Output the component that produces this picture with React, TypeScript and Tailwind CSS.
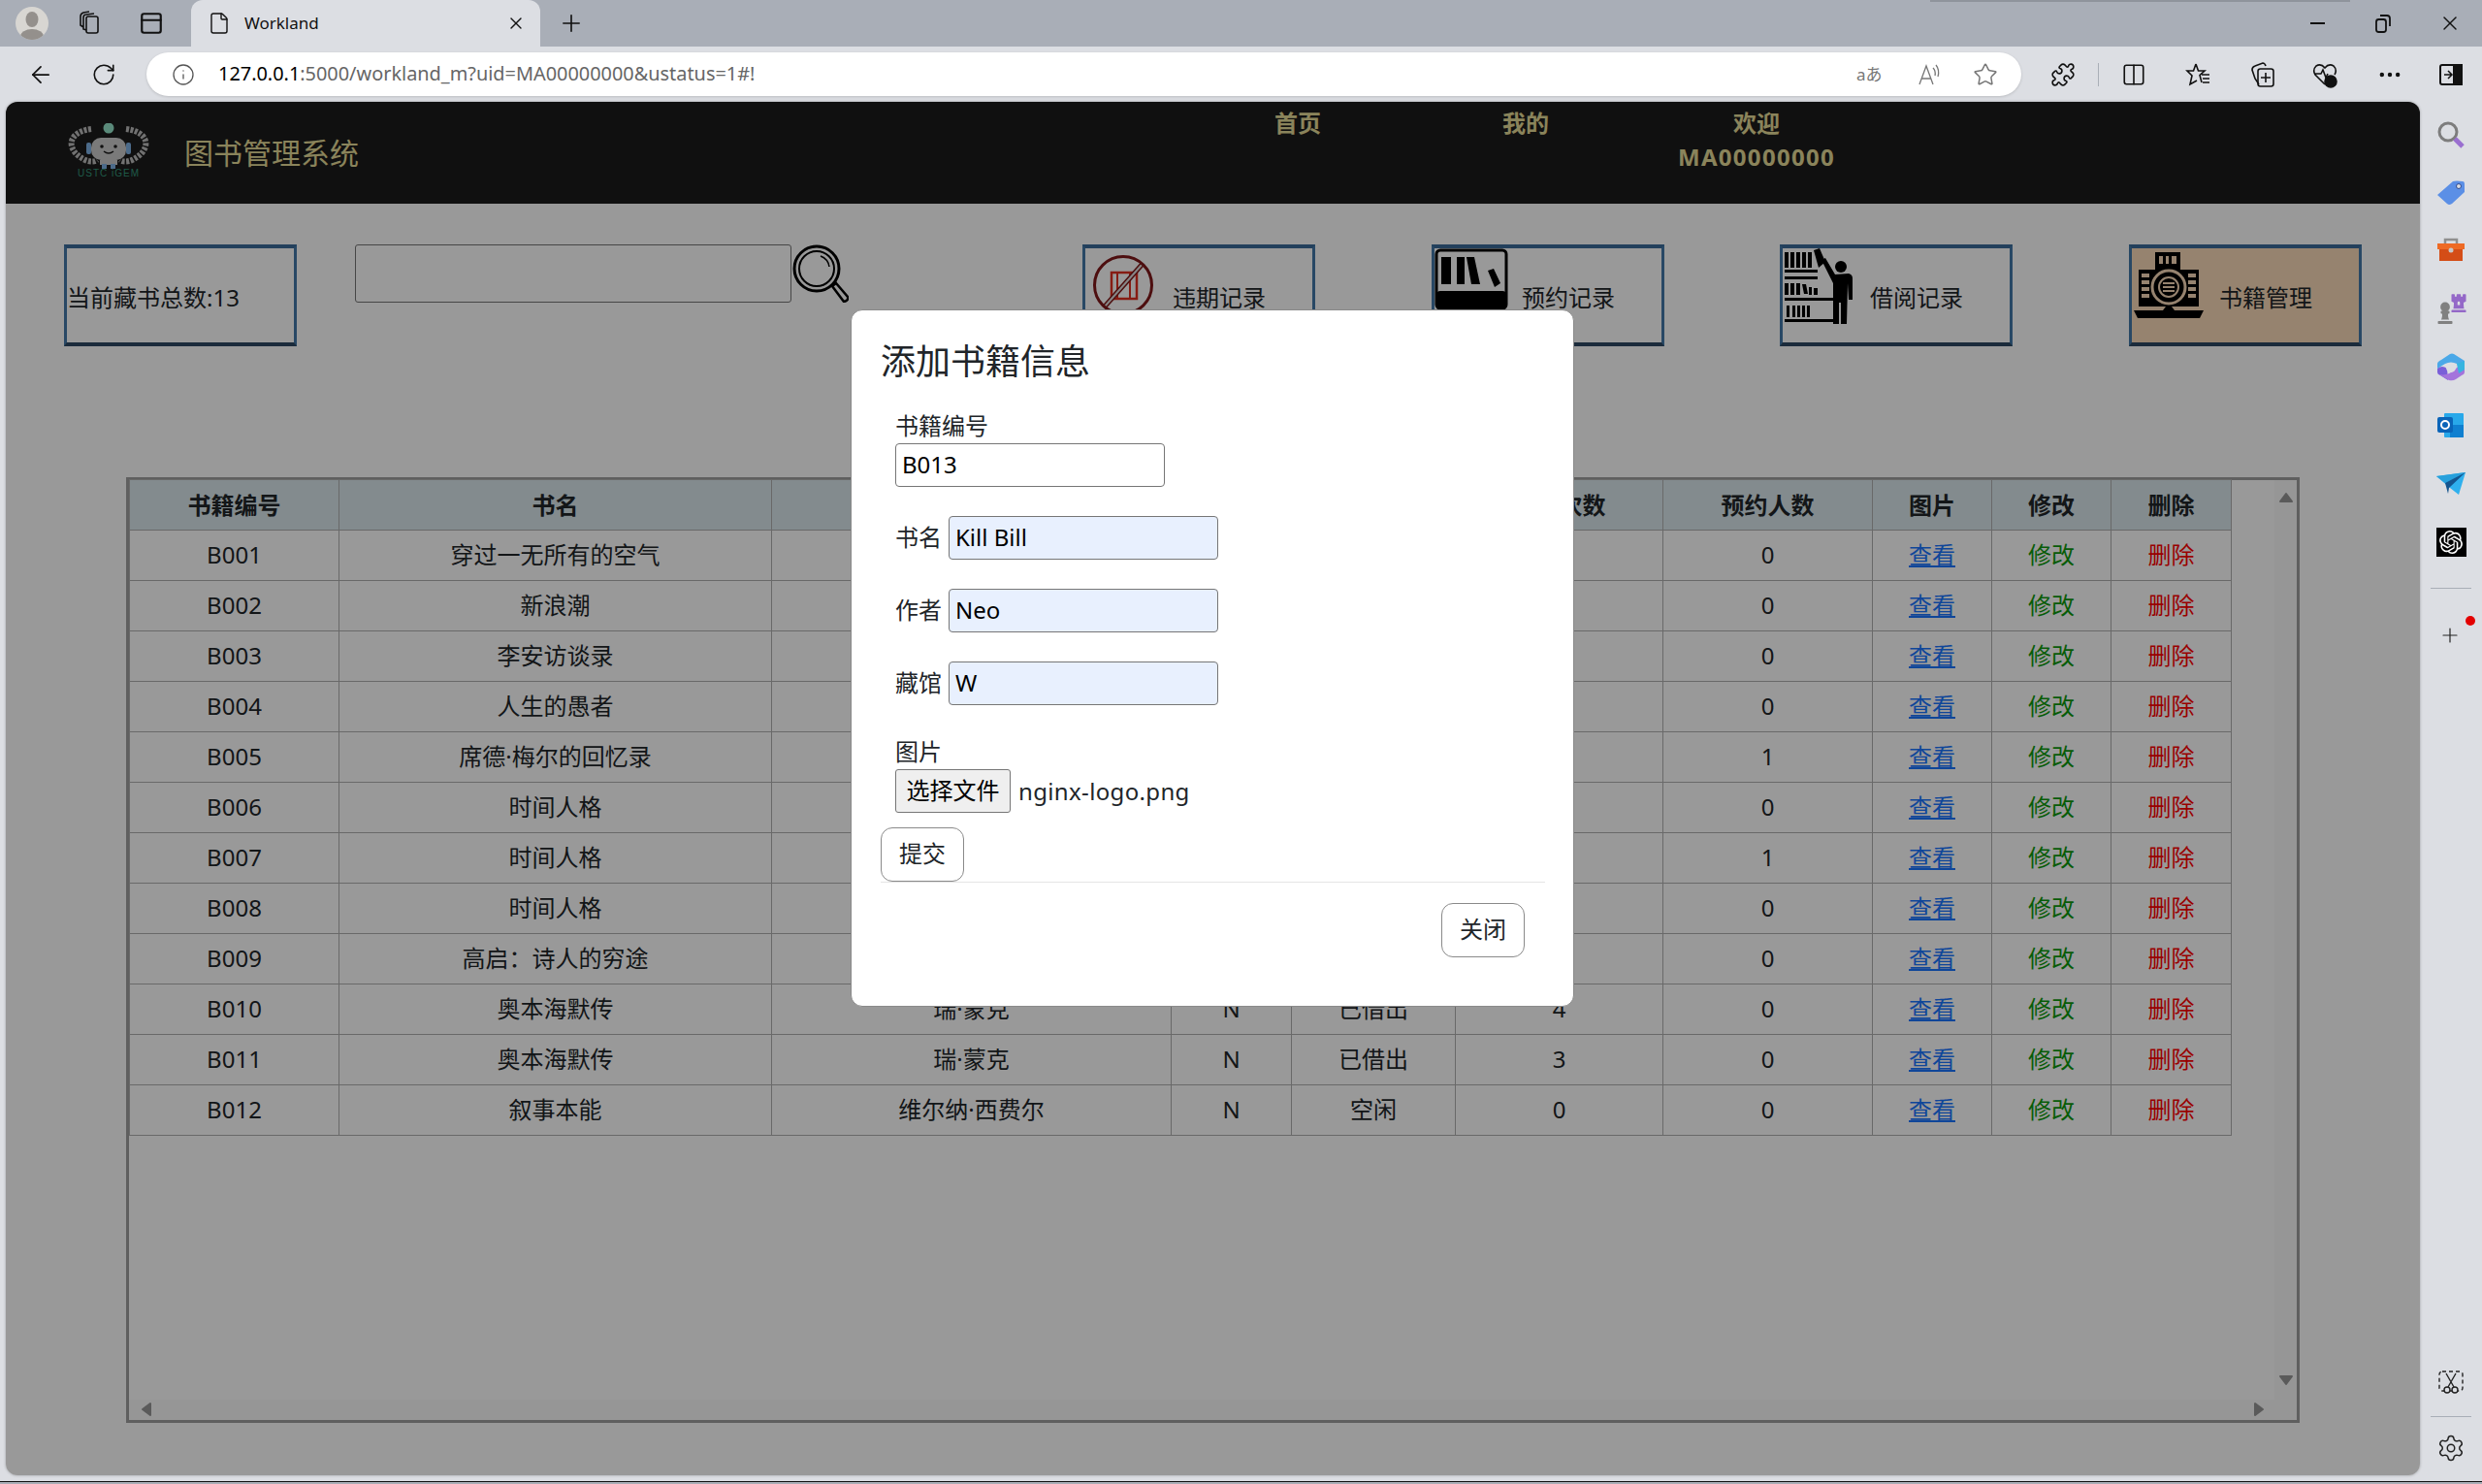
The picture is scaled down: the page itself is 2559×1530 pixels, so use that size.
import React from "react";
import {
  ArrowLeft,
  Columns2,
  File,
  Info,
  MoreHorizontal,
  PanelTop,
  Plus,
  Puzzle,
  RotateCw,
  Settings,
  Star,
  X,
} from "lucide-react";
import { FaChessPawn, FaChessRook } from "react-icons/fa";
import { SiOpenai } from "react-icons/si";

// cells under the modal can't be read in the reference, so they stay empty
const books = [
  ["B001", "穿过一无所有的空气", "", "", "", "", "0"],
  ["B002", "新浪潮", "", "", "", "", "0"],
  ["B003", "李安访谈录", "", "", "", "", "0"],
  ["B004", "人生的愚者", "", "", "", "", "0"],
  ["B005", "席德·梅尔的回忆录", "", "", "", "", "1"],
  ["B006", "时间人格", "", "", "", "", "0"],
  ["B007", "时间人格", "", "", "", "", "1"],
  ["B008", "时间人格", "", "", "", "", "0"],
  ["B009", "高启：诗人的穷途", "", "", "", "", "0"],
  ["B010", "奥本海默传", "瑞·蒙克", "N", "已借出", "4", "0"],
  ["B011", "奥本海默传", "瑞·蒙克", "N", "已借出", "3", "0"],
  ["B012", "叙事本能", "维尔纳·西费尔", "N", "空闲", "0", "0"],
];

const heads = ["书籍编号", "书名", "作者", "是否", "状态", "借阅次数", "预约人数", "图片", "修改", "删除"];
const widths = ["w-[216px]", "w-[446px]", "w-[412px]", "w-[124px]", "w-[169px]", "w-[214px]", "w-[216px]", "w-[123px]", "w-[123px]", "w-[124px]"];

const Logo = () => (
  <svg width="84" height="56" viewBox="0 0 84 56" className="ml-[64px] mt-[22px] shrink-0">
    <path d="M24 6 C8 8 2 16 4 24 C6 30 10 34 18 38 C22 40 28 40 30 38" fill="none" stroke="#bdbdbd" strokeWidth="6" strokeDasharray="3 1.5" />
    <path d="M60 6 C76 8 82 16 80 24 C78 30 74 34 66 38 C62 40 56 40 54 38" fill="none" stroke="#bdbdbd" strokeWidth="6" strokeDasharray="3 1.5" />
    <circle cx="42" cy="5" r="5.5" fill="#96e6cb" />
    <rect x="24" y="15" width="36" height="23" rx="10" fill="#cccccc" />
    <rect x="19" y="20" width="5" height="12" rx="2" fill="#7fb2e6" />
    <rect x="60" y="20" width="5" height="12" rx="2" fill="#7fb2e6" />
    <circle cx="35" cy="24" r="1.8" fill="#1c1c1c" />
    <circle cx="49" cy="24" r="1.8" fill="#1c1c1c" />
    <path d="M37 29 Q42 33 47 29" fill="none" stroke="#1c1c1c" strokeWidth="1.5" />
    <rect x="33" y="38" width="18" height="5" fill="#cccccc" />
    <rect x="35" y="42" width="5" height="5" fill="#7fb2e6" />
    <rect x="44" y="42" width="5" height="5" fill="#7fb2e6" />
    <text x="42" y="55" textAnchor="middle" fontSize="10" letterSpacing="1" fill="#33967a" fontFamily="Liberation Sans">USTC iGEM</text>
  </svg>
);

const Magnifier = () => (
  <svg width="59" height="60" viewBox="0 0 59 60" className="shrink-0">
    <circle cx="26" cy="25" r="23" fill="none" stroke="#000" strokeWidth="3" />
    <circle cx="26" cy="25" r="18" fill="none" stroke="#000" strokeWidth="2" />
    <path d="M30 12 A14 14 0 0 1 39 23" fill="none" stroke="#000" strokeWidth="1.5" />
    <path d="M42 43 L46 40 L58 54 Q59 58 54 59 Z" fill="none" stroke="#000" strokeWidth="2.5" />
  </svg>
);

const OverdueIcon = () => (
  <svg width="64" height="64" viewBox="0 0 64 64" className="ml-[7px] mt-[6px] shrink-0">
    <rect x="20" y="19" width="26" height="27" fill="none" stroke="#e03020" strokeWidth="2.5" />
    <rect x="26" y="19" width="13" height="27" fill="none" stroke="#e03020" strokeWidth="2" />
    <path d="M13 54 L52 10" stroke="#801818" strokeWidth="5" />
    <path d="M13 54 L52 10" stroke="#e0e0e0" strokeWidth="2" />
    <circle cx="32" cy="32" r="29.5" fill="none" stroke="#80181a" strokeWidth="3" />
  </svg>
);

const ReserveIcon = () => (
  <svg width="76" height="66" viewBox="0 0 76 66" className="shrink-0">
    <rect x="2" y="2" width="72" height="60" rx="4" fill="none" stroke="#000" strokeWidth="3" />
    <rect x="2" y="44" width="72" height="18" rx="4" fill="#000" />
    <rect x="7" y="9" width="10" height="28" fill="#000" />
    <rect x="23" y="9" width="8" height="28" fill="#000" />
    <path d="M33 9 L41 9 L47 37 L38 37 Z" fill="#000" />
    <path d="M55 23 L61 21 L68 36 L62 40 Z" fill="#000" />
  </svg>
);

const BorrowIcon = () => (
  <svg width="78" height="78" viewBox="0 0 78 78" className="shrink-0">
    <path d="M2 4h4v16H2zM8 4h4v16H8zM14 4h4v16h-4zM20 4h4v16h-4zM26 4h4v16h-4z" fill="#000" />
    <path d="M32 2 L38 0 L44 14 L37 20 Z" fill="#000" />
    <rect x="2" y="22" width="34" height="3" fill="#000" />
    <rect x="2" y="29" width="34" height="3" fill="#000" />
    <path d="M2 36h4v12H2zM8 36h4v12H8zM14 36h4v12h-4zM20 37l4 0l2 10h-4zM27 40h3v8h-3zM32 41h4v7h-4z" fill="#000" />
    <rect x="2" y="51" width="50" height="3" fill="#000" />
    <path d="M4 59h3v12H4zM10 59h3v12h-3zM15 59h3v12h-3zM20 59h3v12h-3zM25 59h3v12h-3z" fill="#000" />
    <rect x="2" y="73" width="50" height="3" fill="#000" />
    <circle cx="60" cy="19" r="6" fill="#000" />
    <path d="M40 12 L44 10 L54 27 L68 26 Q72 27 72 31 L72 53 L68 53 L67 36 L66 78 L60 78 L60 56 L58 56 L58 78 L52 78 L52 36 Z" fill="#000" />
  </svg>
);

const ManageIcon = () => (
  <svg width="72" height="70" viewBox="0 0 72 70" className="ml-[2px] mt-[4px] shrink-0">
    <rect x="22" y="0" width="26" height="18" fill="#000" />
    <path d="M26 4h4v8h-4zM33 4h3v8h-3zM39 4h5v8h-5z" fill="#fbdbb9" />
    <rect x="5" y="18" width="62" height="38" fill="#000" />
    <path d="M8 22h8v4H8zM8 29h8v4H8zM8 36h8v4H8zM8 43h8v4H8zM56 22h8v4h-8zM56 29h8v4h-8zM56 36h8v4h-8zM56 43h8v4h-8z" fill="#fbdbb9" />
    <circle cx="36" cy="36" r="17" fill="none" stroke="#fbdbb9" strokeWidth="3" />
    <circle cx="36" cy="36" r="10" fill="none" stroke="#fbdbb9" strokeWidth="2" />
    <path d="M30 32h12M30 36h12M30 40h12" stroke="#fbdbb9" strokeWidth="2" />
    <path d="M0 60 H30 L33 56 H39 L42 60 H72 L68 68 H4 Z" fill="#000" />
  </svg>
);

const Triangle = ({ points, className }: { points: string; className: string }) => (
  <svg width="16" height="16" viewBox="0 0 16 16" className={className}>
    <polygon points={points} fill="#969696" stroke="#969696" strokeWidth="2" strokeLinejoin="round" />
  </svg>
);

const StatBox = ({ label, icon, active }: { label: string; icon: React.ReactNode; active?: boolean }) => (
  <div
    className={`flex h-[105px] w-[240px] shrink-0 border-x-[3px] border-y-4 border-x-[#4379a8] border-t-[#3b6c99] border-b-[#2d4963] ${
      active ? "bg-[#fbdbb9]" : ""
    }`}
  >
    <div className="w-[90px] shrink-0">{icon}</div>
    <span className="mt-[34px] text-[24px] leading-[34px]">{label}</span>
  </div>
);

const ModalButton = ({ children }: { children: React.ReactNode }) => (
  <button className="h-[56px] w-[86px] rounded-[12px] border border-[#8a8a8a] bg-white pb-[2px] text-[24px] text-[#212529]">
    {children}
  </button>
);

const FormRow = ({ label, value, className }: { label: string; value: string; className: string }) => (
  <div className={`flex items-center ${className}`}>
    <label className="w-[55px] pb-[2px] text-[24px]">{label}</label>
    <input
      readOnly
      value={value}
      className="h-[45px] w-[278px] rounded-[4px] border border-[#767676] bg-[#e8f0fe] px-[6px] pb-[2px] text-[24px] text-black outline-none"
    />
  </div>
);

const TopBar = () => (
  <div className="relative flex h-[48px] items-center bg-[#a9aeb7]">
    <div className="absolute left-[1990px] top-0 h-[2px] w-[433px] bg-[#8f949c]" />
    <div className="ml-[16px] flex h-[34px] w-[34px] items-end justify-center overflow-hidden rounded-full bg-[#d8d6d2]">
      <svg width="34" height="34" viewBox="0 0 34 34">
        <ellipse cx="17" cy="13" rx="6.5" ry="8" fill="#94908c" />
        <ellipse cx="17" cy="31" rx="12" ry="8" fill="#94908c" />
      </svg>
    </div>
    <div className="ml-[26px] flex w-[32px] justify-center">
      <svg width="28" height="28" viewBox="0 0 28 28" fill="none" stroke="#111" strokeWidth="1.6">
        <rect x="11" y="7" width="12" height="17" rx="2" />
        <path d="M11 21 L8 20 V8 Q8 5 11 5 L19 4 M8 18 L5 16 V7 Q5 4 8 3 L14 2" />
      </svg>
    </div>
    <div className="ml-[32px] flex w-[32px] justify-center">
      <PanelTop size={26} strokeWidth={2} color="#111" />
    </div>
    <div className="ml-[25px] flex h-[48px] w-[360px] items-center rounded-t-[12px] bg-[#dcdee3] pl-[17px]">
      <File size={24} strokeWidth={1.4} color="#111" />
      <span className="ml-[14px] text-[17px] text-[#111]">Workland</span>
      <X size={20} strokeWidth={1.6} color="#111" className="ml-[193px]" />
    </div>
    <Plus size={28} strokeWidth={1.4} color="#111" className="ml-[18px]" />
    <div className="ml-auto flex items-center pr-[21px]">
      <div className="h-[2px] w-[15px] bg-[#111]" />
      <svg width="18" height="22" viewBox="0 0 18 22" fill="none" stroke="#111" strokeWidth="1.8" className="ml-[51px]">
        <rect x="2" y="7" width="10" height="13" rx="2.5" />
        <path d="M6 3 H13 Q16 3 16 6 V14" />
      </svg>
      <X size={24} strokeWidth={1.4} color="#111" className="ml-[48px]" />
    </div>
  </div>
);

const AddressBar = () => (
  <div className="flex h-[57px] items-center bg-[#dcdee3]">
    <ArrowLeft size={28} strokeWidth={1.5} color="#111" className="ml-[28px]" />
    <RotateCw size={26} strokeWidth={1.5} color="#111" className="ml-[38px]" />
    <div className="ml-[31px] flex h-[45px] w-[1933px] items-center rounded-full bg-white pl-[26px] shadow-[0_1px_3px_rgba(0,0,0,0.15)]">
      <Info size={24} strokeWidth={1.3} color="#555" />
      <span className="ml-[24px] pb-[2px] text-[19.9px] text-[#666]">
        <span className="text-black">127.0.0.1</span>:5000/workland_m?uid=MA00000000&ustatus=1#!
      </span>
      <div className="ml-auto flex items-center pr-[24px] text-[#777]">
        <span className="w-[26px] whitespace-nowrap text-[17px]">aあ</span>
        <svg width="26" height="26" viewBox="0 0 26 26" fill="none" stroke="#777" strokeWidth="1.3" className="ml-[36px]">
          <path d="M3 23 L10 4 L17 23 M5.5 17 H14.5 M17 6 Q20 9 19 14 M20 3 Q24 8 22 15" />
        </svg>
        <Star size={26} strokeWidth={1.4} className="ml-[32px]" />
      </div>
    </div>
    <Puzzle size={26} strokeWidth={1.5} color="#111" className="ml-[30px]" />
    <div className="ml-[23px] h-[24px] w-px bg-[#a9aeb7]" />
    <Columns2 size={26} strokeWidth={1.5} color="#111" className="ml-[23px]" />
    <svg width="28" height="28" viewBox="0 0 28 28" fill="none" stroke="#111" strokeWidth="1.6" className="ml-[40px]">
      <path d="M11 3 L13.5 10 L20 10 L15 14.5 L17 22 M11 3 L8.5 10 L2 10 L7 15 L5 24 L12 20 M17 14 H25 M18 18 H25 M18 22 H25" />
    </svg>
    <svg width="28" height="28" viewBox="0 0 28 28" fill="none" stroke="#111" strokeWidth="1.6" className="ml-[38px]">
      <path d="M10 24 L6 18 L3 9 Q3 6 6 5 L14 2 Q16 2 17 5" />
      <rect x="9" y="8" width="16" height="18" rx="2.5" />
      <path d="M17 12 V22 M12 17 H22" />
    </svg>
    <svg width="28" height="28" viewBox="0 0 28 28" fill="none" stroke="#111" strokeWidth="1.6" className="ml-[36px]">
      <path d="M14 24 L4 14 Q1 9 5 5 Q10 2 14 7 Q18 2 23 5 Q27 9 24 14 M3 13 H10 L12 9 L15 17 L17 13" />
      <circle cx="20" cy="21" r="6" fill="#111" />
    </svg>
    <MoreHorizontal size={28} strokeWidth={1.8} color="#111" className="ml-[39px]" />
    <svg width="28" height="28" viewBox="0 0 28 28" fill="none" stroke="#111" strokeWidth="2" className="ml-[35px]">
      <rect x="3" y="4" width="22" height="20" rx="2" />
      <rect x="17" y="4" width="8" height="20" fill="#111" />
      <path d="M7 14 H14 M11 10 L15 14 L11 18" strokeWidth="1.5" />
    </svg>
  </div>
);

const SideBar = () => (
  <div className="flex flex-1 flex-col items-center pt-[19px]">
    <div className="flex flex-col items-center gap-[30px]">
      <svg width="30" height="30" viewBox="0 0 30 30">
        <circle cx="12" cy="12" r="9" fill="none" stroke="#7d7d7d" strokeWidth="3" />
        <path d="M19 19 L27 27" stroke="#9a6fd0" strokeWidth="5" />
      </svg>
      <svg width="30" height="30" viewBox="0 0 30 30">
        <path d="M1 17 L17 3 Q20 2 27 3 Q29 3 29 6 V14 L16 26 Q13 28 11 26 Z" fill="#5b8fe6" />
        <circle cx="23" cy="8" r="2.5" fill="#dcdee3" stroke="#304a90" />
      </svg>
      <svg width="30" height="30" viewBox="0 0 30 30">
        <path d="M9 7 V3 H21 V7" fill="none" stroke="#8f8f8f" strokeWidth="2.5" />
        <rect x="1" y="7" width="28" height="6" fill="#ee6a25" />
        <rect x="3" y="13" width="24" height="12" fill="#d44d17" />
        <circle cx="15" cy="14" r="2.5" fill="#c8c8c8" />
      </svg>
      <div className="relative h-[30px] w-[30px]">
        <FaChessPawn size={24} color="#808080" className="absolute bottom-0 left-[-3px]" />
        <FaChessRook size={20} color="#9468c8" className="absolute right-[-3px] top-[-2px]" />
      </div>
      <svg width="30" height="30" viewBox="0 0 30 30">
        <path d="M5 7 L14 1 Q16 0 18 1 L29 8 V16 L21 11 Q15 8 9 11 L1 16 V11 Q1 9 5 7 Z" fill="#4aa8e8" />
        <path d="M1 11 V20 Q1 22 4 23 L12 28 L11 16 Q6 12 1 16 Z" fill="#7a5fd8" />
        <path d="M29 8 V20 Q29 22 26 23 L20 27 Q17 29 13 28 L3 22 Q12 24 19 17 Q24 12 29 8 Z" fill="#a474dc" />
        <path d="M29 8 V17 L23 21 L21 11 Z" fill="#36b4e0" />
        <circle cx="15" cy="15" r="5" fill="#dcdee3" />
      </svg>
      <svg width="30" height="30" viewBox="0 0 30 30">
        <rect x="8" y="2" width="20" height="25" rx="1" fill="#28a8ea" />
        <path d="M14 14 L28 14 V27 H14 Z" fill="#0f7fd0" />
        <rect x="1" y="6" width="16" height="16" rx="2" fill="#0a64b8" />
        <circle cx="9" cy="14" r="4" fill="none" stroke="#fff" strokeWidth="2" />
      </svg>
      <svg width="30" height="30" viewBox="0 0 30 30">
        <path d="M0 7 L30 3 L23 26 L14 19 Z" fill="#2fb0ee" />
        <path d="M0 7 L30 3 L9 14 Z" fill="#27a0dc" />
        <path d="M9 14 L30 3 L13 19 L12 25 Z" fill="#14558f" />
      </svg>
      <div className="flex h-[30px] w-[31px] items-center justify-center bg-black">
        <SiOpenai size={24} color="#fff" />
      </div>
    </div>
    <div className="mt-[32px] h-px w-[42px] bg-[#a9aeb7]" />
    <div className="relative mt-[33px] flex h-[30px] w-[30px] items-center justify-center">
      <Plus size={24} strokeWidth={1.2} color="#222" className="-ml-[2px]" />
      <div className="absolute right-[-10px] top-[-5px] h-[10px] w-[10px] rounded-full bg-[#e30000]" />
    </div>
    <div className="mt-auto flex flex-col items-center pb-[13px]">
      <svg width="28" height="30" viewBox="0 0 28 30" fill="none" stroke="#222" strokeWidth="1.4">
        <rect x="2" y="4" width="24" height="20" rx="3" strokeDasharray="4 3" />
        <path d="M9 6 L17 20 M19 6 L11 20" />
        <circle cx="10" cy="23" r="3" fill="#dcdee3" />
        <circle cx="18" cy="23" r="3" fill="#dcdee3" />
      </svg>
      <div className="mb-[17px] mt-[20px] h-px w-[42px] bg-[#a9aeb7]" />
      <Settings size={30} strokeWidth={1.2} color="#222" />
    </div>
  </div>
);

const Modal = () => (
  <div className="absolute left-[871px] top-[214px] h-[719px] w-[746px] rounded-[12px] border border-[#8a8a8a] bg-white pl-[30px] pr-[29px] pt-[26px] text-[#212529]">
    <h2 className="pb-[1px] text-[36px] leading-[53px]">添加书籍信息</h2>
    <form className="pl-[15px] pt-[23px]">
      <label className="block pb-[2px] text-[24px] leading-[32px]">书籍编号</label>
      <input
        readOnly
        value="B013"
        className="block h-[45px] w-[278px] rounded-[4px] border border-[#767676] bg-white px-[6px] pb-[2px] text-[24px] text-black outline-none"
      />
      <FormRow label="书名" value="Kill Bill" className="mt-[30px]" />
      <FormRow label="作者" value="Neo" className="mt-[30px]" />
      <FormRow label="藏馆" value="W" className="mt-[30px]" />
      <label className="mt-[32px] block pb-[2px] text-[24px] leading-[32px]">图片</label>
      <div className="flex h-[45px] items-center">
        <button type="button" className="h-[45px] w-[119px] rounded-[3px] border border-[#767676] bg-[#efefef] pb-[2px] text-[24px] text-black">
          选择文件
        </button>
        <span className="ml-[8px] text-[24px] tracking-[0.35px]">nginx-logo.png</span>
      </div>
    </form>
    <div className="mt-[15px] flex border-b border-[#e5e5e5]">
      <ModalButton>提交</ModalButton>
    </div>
    <div className="flex justify-end pr-[21px] pt-[21px]">
      <ModalButton>关闭</ModalButton>
    </div>
  </div>
);

export default function App() {
  return (
    <div className="relative h-[1530px] w-[2559px] overflow-hidden bg-[#dcdee3] font-['Noto_Sans','Noto_Sans_CJK_SC',sans-serif] text-[#212529]">
      <TopBar />
      <AddressBar />
      <div className="flex h-[1416px] pl-[6px]">
        <main className="relative h-[1416px] w-[2489px] shrink-0 overflow-hidden rounded-[12px] bg-white shadow-[0_0_3px_rgba(0,0,0,0.3)]">
          <header className="flex h-[105px] bg-[#1c1c1c] text-[#e6dd98]">
            <Logo />
            <h1 className="ml-[36px] mt-[27px] text-[30px] leading-[52px]">图书管理系统</h1>
            <div className="relative ml-[944px] mt-[4px] flex items-start text-[24px] font-bold leading-[36px]">
              <span className="w-[48px] text-center">首页</span>
              <span className="ml-[187px] w-[48px] text-center">我的</span>
              <div className="ml-[134px] flex w-[160px] flex-col items-center leading-[35px]">
                <span>欢迎</span>
                <span className="tracking-[1.3px]">MA00000000</span>
              </div>
            </div>
          </header>

          <div className="flex pl-[60px] pt-[42px]">
            <div className="flex h-[105px] w-[240px] shrink-0 border-x-[3px] border-y-4 border-x-[#4379a8] border-t-[#3b6c99] border-b-[#2d4963]">
              <span className="mt-[34px] text-[24px] leading-[34px]">当前藏书总数:13</span>
            </div>
            <div className="ml-[60px] flex shrink-0">
              <input className="h-[60px] w-[450px] rounded-[3px] border border-[#767676]" />
              <Magnifier />
            </div>
            <div className="ml-[241px]">
              <StatBox label="违期记录" icon={<OverdueIcon />} />
            </div>
            <div className="ml-[120px]">
              <StatBox label="预约记录" icon={<ReserveIcon />} />
            </div>
            <div className="ml-[119px]">
              <StatBox label="借阅记录" icon={<BorrowIcon />} />
            </div>
            <div className="ml-[120px]">
              <StatBox label="书籍管理" icon={<ManageIcon />} active />
            </div>
          </div>

          <div className="relative ml-[124px] mt-[135px] h-[975px] w-[2241px] border-[3px] border-[#9e9e9e]">
            <table className="-mt-px table-fixed border-collapse text-center text-[24px]">
              <thead>
                <tr className="h-[52px] bg-[#dae8ed]">
                  {heads.map((h, i) => (
                    <th key={h} className={`${widths[i]} border border-[#b0b0b0] font-bold`}>
                      {h}
                    </th>
                  ))}
                </tr>
              </thead>
              <tbody>
                {books.map((b) => (
                  <tr key={b[0]} className="h-[52px]">
                    {b.map((c, i) => (
                      <td key={i} className="border border-[#b0b0b0] p-0 pb-[2px]">
                        {c}
                      </td>
                    ))}
                    <td className="border border-[#b0b0b0] p-0 pb-[2px]">
                      <a href="#!" className="text-[#1a76ff] underline">查看</a>
                    </td>
                    <td className="border border-[#b0b0b0] p-0 pb-[2px] text-[#0c9a0c]">修改</td>
                    <td className="border border-[#b0b0b0] p-0 pb-[2px] text-[#ff0000]">删除</td>
                  </tr>
                ))}
              </tbody>
            </table>
            {/* scrollbars */}
            <div className="absolute bottom-0 right-0 top-0 w-[23px] bg-[#fafafa]" />
            <div className="absolute bottom-0 left-0 right-0 h-[21px] bg-[#fafafa]" />
            <Triangle points="8,4 14,12 2,12" className="absolute right-[3px] top-[10px]" />
            <Triangle points="8,12 14,4 2,4" className="absolute bottom-[33px] right-[3px]" />
            <Triangle points="4,8 12,2 12,14" className="absolute bottom-[3px] left-[10px]" />
            <Triangle points="12,8 4,2 4,14" className="absolute bottom-[3px] right-[31px]" />
          </div>

          <div className="absolute inset-0 bg-black/40" />
          <Modal />
        </main>
        <SideBar />
      </div>
      <div className="mt-[6px] h-[1px] bg-[#111]" />
      <div className="h-[2px] bg-[#a9aeb7]" />
    </div>
  );
}
